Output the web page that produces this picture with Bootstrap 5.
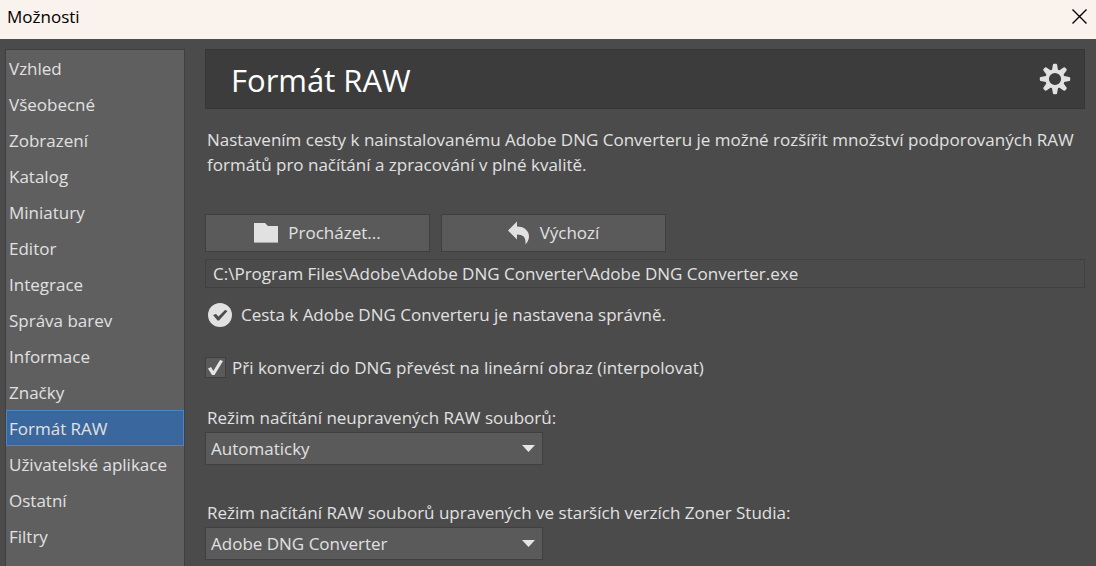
<!DOCTYPE html>
<html lang="cs" data-bs-theme="dark">
<head>
<meta charset="utf-8">
<meta name="viewport" content="width=device-width, initial-scale=1">
<title>Možnosti</title>
<link href="https://cdn.jsdelivr.net/npm/bootstrap@5.3.0/dist/css/bootstrap.min.css" rel="stylesheet">
<style>
  body { font-family: "Open Sans", "Noto Sans", sans-serif; font-size: 17px; line-height: 25px; color: #e1e1e1; background: #4b4b4b; }
  .window { height: 100vh; }
  .titlebar { background: #faf2ec; color: #000; height: 39px; padding: 0 8px 6px 7px; }
  .close-btn { border: 0; background: none; color: #000; line-height: 0; padding: 0; }
  .content-area { min-height: 0; padding: 10px 11px 0 5px; gap: 20px; }
  .side { width: 180px; background: #5f5f5f; border: 1px solid #3f3f3f; border-bottom: 0; overflow: hidden; }
  .side a { height: 36px; line-height: 35px; padding: 0 2px; border: 1px solid transparent; color: #e1e1e1; text-decoration: none; white-space: nowrap; flex-shrink: 0; }
  .side a.active { background: #3a679e; border-color: #4c84c8; }
  .main-pane { min-width: 0; }
  .heading { height: 60px; background: #3c3c3c; border: 1px solid #363636; padding: 0 13px 0 25px; }
  .heading h1 { font-size: 31px; line-height: 40px; margin: 0; padding-top: 2px; }
  .intro { padding: 0 2px; margin: 18px 0 37px; }
  .tool-row { gap: 11px; }
  .tool-btn { width: 225px; height: 38px; padding: 0; gap: 10px; background: #5a5a5a; color: #e1e1e1; border: 1px solid #3f3f3f; border-radius: 0; font-size: 17px; }
  .path-box { height: 29px; margin-top: 7px; padding: 0 7px; background: transparent; color: #e1e1e1; border: 1px solid #404040; border-radius: 0; font-size: 17px; }
  .status { height: 25px; margin-top: 14px; padding-left: 3px; gap: 9px; }
  .option { height: 25px; margin-top: 28px; gap: 6px; }
  .option .form-check-input { width: 21px; height: 21px; margin: 0; border: 1px solid #3f3f3f; border-radius: 0; background-color: #5a5a5a; }
  .option .form-check-input:checked { background-size: 17px; background-image: url("data:image/svg+xml,%3Csvg xmlns='http://www.w3.org/2000/svg' viewBox='0 0 17 17'%3E%3Cpath d='M1 9.500L4 8L6.300 12L13 1L16 2L7.500 16H5Z' fill='%23e6e6e6'/%3E%3C/svg%3E"); }
  .field-label { padding-left: 2px; margin: 25px 0 2px; display: block; }
  .drop { width: 338px; height: 33px; padding: 1px 30px 0 5px; line-height: 30px; border: 1px solid #3f3f3f; border-radius: 0; color: #e1e1e1; background-color: #5a5a5a; font-size: 17px; background-position: right 7px center; background-size: 13px 7px; background-image: url("data:image/svg+xml,%3Csvg xmlns='http://www.w3.org/2000/svg' viewBox='0 0 13 7'%3E%3Cpath d='M0 0H13L6.500 7Z' fill='%23e6e6e6'/%3E%3C/svg%3E"); }
  .drop + .field-label { margin-top: 35px; }
</style>
</head>
<body>
<div class="window d-flex flex-column overflow-hidden">
  <header class="titlebar d-flex align-items-center justify-content-between flex-shrink-0">
    <span>Možnosti</span>
    <button class="close-btn" type="button" aria-label="Zavřít"><svg width="17" height="17" viewBox="0 0 17 17" stroke="currentColor" stroke-width="1.400" fill="none"><path d="M1.500 1.500L15.500 15.500M15.500 1.500L1.500 15.500"/></svg></button>
  </header>
  <div class="content-area d-flex flex-grow-1">
    <nav class="side d-flex flex-column flex-shrink-0" aria-label="Kategorie">
      <a href="#">Vzhled</a>
      <a href="#">Všeobecné</a>
      <a href="#">Zobrazení</a>
      <a href="#">Katalog</a>
      <a href="#">Miniatury</a>
      <a href="#">Editor</a>
      <a href="#">Integrace</a>
      <a href="#">Správa barev</a>
      <a href="#">Informace</a>
      <a href="#">Značky</a>
      <a href="#" class="active" aria-current="page">Formát RAW</a>
      <a href="#">Uživatelské aplikace</a>
      <a href="#">Ostatní</a>
      <a href="#">Filtry</a>
    </nav>
    <main class="main-pane flex-grow-1">
      <div class="heading d-flex align-items-center justify-content-between">
        <h1 class="fw-normal">Formát RAW</h1>
        <svg width="32" height="32" viewBox="-16 -16 32 32" fill="#e1e1e1" aria-hidden="true">
          <g id="teeth"><path id="tooth" d="M-3.200 -8L-2.100 -14.200Q-2 -15.200 -1 -15.200H1Q2 -15.200 2.100 -14.200L3.200 -8Z"/><use href="#tooth" transform="rotate(45)"/><use href="#tooth" transform="rotate(90)"/><use href="#tooth" transform="rotate(135)"/></g>
          <use href="#teeth" transform="rotate(180)"/>
          <circle r="7.900" fill="none" stroke="#e1e1e1" stroke-width="3.600"/>
        </svg>
      </div>
      <p class="intro">Nastavením cesty k nainstalovanému Adobe DNG Converteru je možné rozšířit množství podporovaných RAW formátů pro načítání a zpracování v plné kvalitě.</p>
      <div class="tool-row d-flex">
        <button type="button" class="btn tool-btn d-flex align-items-center justify-content-center"><svg width="24" height="20" viewBox="0 0 24 20" aria-hidden="true"><path d="M0 0H11L14 3H24V20H0Z" fill="#e1e1e1"/><path d="M0 19H24V20H0Z" fill="#aaa"/></svg>Procházet...</button>
        <button type="button" class="btn tool-btn d-flex align-items-center justify-content-center"><svg width="22" height="24" viewBox="0 0 22 24" aria-hidden="true"><path d="M0 9.500L9 0.500V5.500C17 5.500 21 10.500 21 15.500C21 19 19 22 17.500 23.500C18 17 16 13.500 9 13.500V18.500Z" fill="#e1e1e1"/></svg>Výchozí</button>
      </div>
      <input type="text" class="form-control path-box" aria-label="Cesta k Adobe DNG Converteru" value="C:\Program Files\Adobe\Adobe DNG Converter\Adobe DNG Converter.exe">
      <div class="status d-flex align-items-center">
        <svg width="24" height="24" viewBox="0 0 24 24" aria-hidden="true"><circle cx="12" cy="12" r="12" fill="#e1e1e1"/><path d="M5 12L8 11L10.500 13.500L17 7L19.500 8L11 17.500H9.500Z" fill="#4b4b4b"/></svg>
        <span>Cesta k Adobe DNG Converteru je nastavena správně.</span>
      </div>
      <div class="option d-flex align-items-center">
        <input class="form-check-input" type="checkbox" id="linear" checked>
        <label for="linear">Při konverzi do DNG převést na lineární obraz (interpolovat)</label>
      </div>
      <label class="field-label" for="mode-raw">Režim načítání neupravených RAW souborů:</label>
      <select class="form-select drop" id="mode-raw"><option>Automaticky</option></select>
      <label class="field-label" for="mode-old">Režim načítání RAW souborů upravených ve starších verzích Zoner Studia:</label>
      <select class="form-select drop" id="mode-old"><option>Adobe DNG Converter</option></select>
    </main>
  </div>
</div>
<script src="https://cdn.jsdelivr.net/npm/bootstrap@5.3.0/dist/js/bootstrap.bundle.min.js"></script>
</body>
</html>
